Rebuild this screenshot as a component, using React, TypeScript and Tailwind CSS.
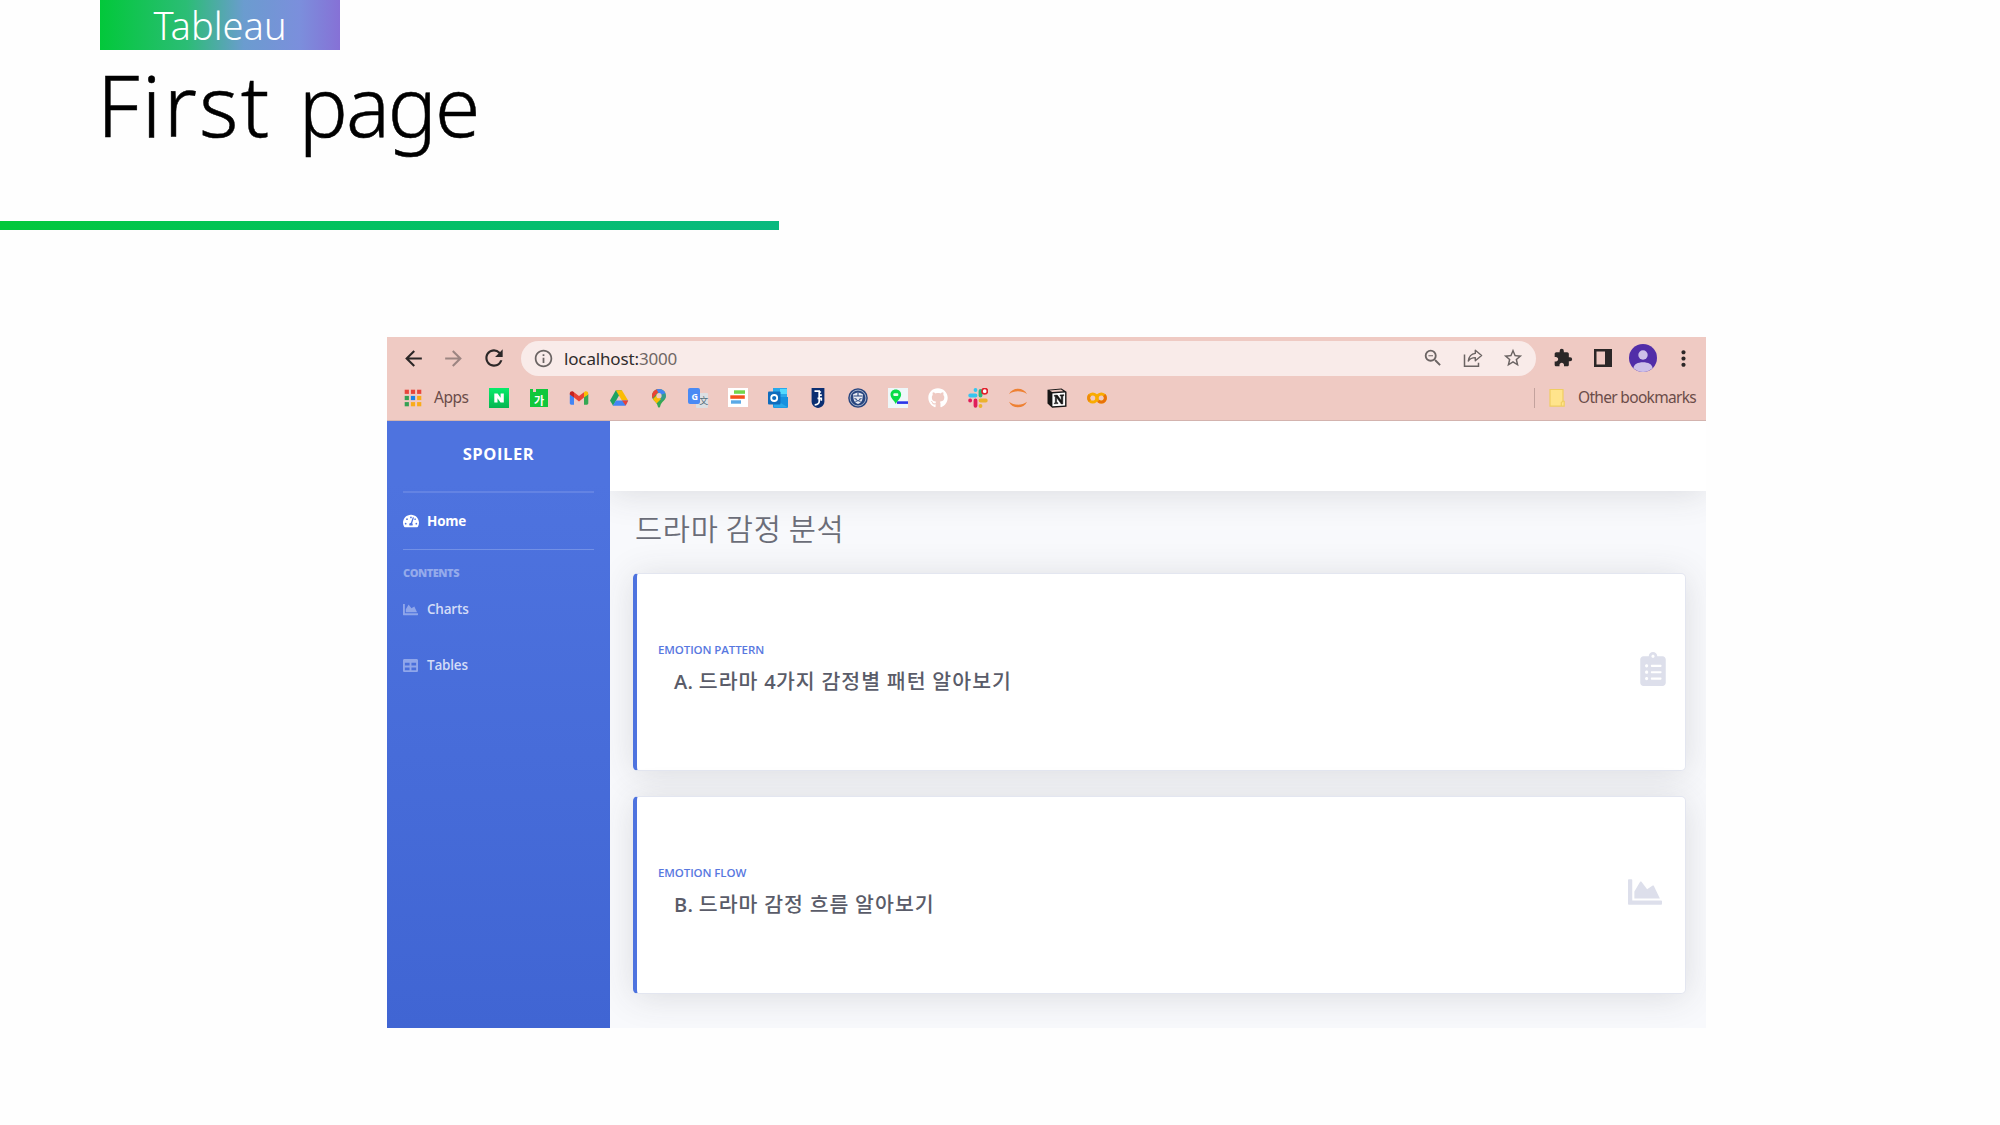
import React from "react";
import { MdArrowBack, MdArrowForward, MdRefresh, MdInfoOutline, MdZoomOut, MdStarBorder, MdExtension, MdMoreVert } from "react-icons/md";
import { FaTachometerAlt, FaChartArea, FaTable, FaClipboardList, FaGithub } from "react-icons/fa";

const Slot = ({ children }: { children: React.ReactNode }) => (
  <span className="flex h-5 w-5 shrink-0 items-center justify-center">{children}</span>
);

const Svg = ({ children }: { children: React.ReactNode }) => (
  <svg viewBox="0 0 20 20" className="h-5 w-5">{children}</svg>
);

const gridColors = ["#e8453c", "#e8453c", "#e8453c", "#34a053", "#1a82e8", "#f9ab1a", "#34a053", "#f9ab1a", "#f9ab1a"];

const AppsIcon = () => (
  <Svg>
    {gridColors.map((c, i) => (
      <rect key={i} x={1.7 + (i % 3) * 6.2} y={1.7 + Math.floor(i / 3) * 6.2} width="4.2" height="4.2" fill={c} />
    ))}
  </Svg>
);

const NaverIcon = () => (
  <Svg>
    <defs>
      <linearGradient id="nv" x1="0" y1="0" x2="0" y2="1">
        <stop offset="0" stopColor="#07ec6a" />
        <stop offset="1" stopColor="#06b551" />
      </linearGradient>
    </defs>
    <rect width="20" height="20" fill="url(#nv)" />
    <path d="M5.3 5.6h3.3l3 4.2V5.6h3.2v9h-3.3l-3-4.3v4.3H5.3z" fill="#fff" />
  </Svg>
);

const DictIcon = () => (
  <span className="relative flex h-[18px] w-[18px] items-center justify-center bg-[#10c73c] pt-1 font-['Noto_Sans_CJK_KR',sans-serif] text-[11px] leading-none font-bold text-white">
    <span className="absolute top-0 left-[3px] h-[3px] w-[3px] bg-[#efcac3]" />
    가
  </span>
);

const GmailIcon = () => (
  <Svg>
    <path d="M.8 6v9.3c0 .8.6 1.4 1.4 1.4H5V8.8z" fill="#4285f4" />
    <path d="M15 8.8v7.9h2.9c.8 0 1.4-.6 1.4-1.4V6z" fill="#34a853" />
    <path d="M.8 5.4C.8 3.5 3 2.6 4.4 3.7L5 4.2v5.4L.8 6.4z" fill="#c5221f" />
    <path d="M5 4.2l5 3.8 5-3.8v5.4l-5 3.8-5-3.8z" fill="#ea4335" />
    <path d="M15 4.2l.6-.5c1.5-1.1 3.6-.2 3.6 1.7v1L15 9.6z" fill="#fbbc04" />
  </Svg>
);

const DriveIcon = () => (
  <Svg>
    <path d="M6.8 2.2h6.1L10 7.6 4.1 17.8 1 12.4z" fill="#1ea362" />
    <path d="M6.8 2.2h6.1l6.2 10.4h-6.2z" fill="#fbbc04" />
    <path d="M7 12.4h12.2l-2.7 5.4H3.8z" fill="#4285f4" />
    <path d="M13 12.4h6.2l-2.5 5.2z" fill="#ea4335" />
  </Svg>
);

const MapsIcon = () => (
  <Svg>
    <defs>
      <clipPath id="pin"><path d="M10 1c-4 0-7 3-7 6.9 0 4.3 4.8 5.6 5.7 10 .2 1.3.6 1.7 1.3 1.7s1.1-.4 1.3-1.7C12.2 13.5 17 12.2 17 7.9 17 4 14 1 10 1z" /></clipPath>
    </defs>
    <g clipPath="url(#pin)">
      <rect width="20" height="20" fill="#34a853" />
      <path d="M0 0h13L3 11H0z" fill="#ea4335" />
      <path d="M6.5 0H20v4l-9 3z" fill="#4285f4" />
      <path d="M3 12l5-5 4 4-6 6z" fill="#fbbc04" />
      <path d="M12 5l5-3 2 6-7 5z" fill="#4285f4" opacity=".35" />
    </g>
    <circle cx="10" cy="7.7" r="2.6" fill="#efcac3" />
  </Svg>
);

const TranslateIcon = () => (
  <span className="relative block h-5 w-5">
    <span className="absolute right-0 bottom-0 flex h-[15px] w-[12px] items-center justify-center rounded-[1px] bg-[#dcdfe3] pl-0.5 font-['Noto_Sans_CJK_SC',sans-serif] text-[9px] leading-none text-[#546e7a]">文</span>
    <span className="absolute top-0 left-0 flex h-4 w-[12px] items-center justify-center rounded-[2px] bg-[#4a8af4] font-['Open_Sans',sans-serif] text-[9px] leading-none font-bold text-white">G</span>
  </span>
);

const BarsIcon = () => (
  <Svg>
    <rect y="0" width="20" height="19" fill="#fff" />
    <rect x="6" y="2.3" width="11" height="3.5" fill="#72d64c" />
    <rect x="2.3" y="7.3" width="14.5" height="3.5" fill="#f4511e" />
    <rect x="3" y="12.3" width="10" height="3.4" fill="#5aa9e6" />
  </Svg>
);

const OutlookIcon = () => (
  <Svg>
    <rect x="5" y="0" width="14" height="12" fill="#28a8ea" />
    <rect x="12" y="1" width="7" height="5" fill="#50d9ff" />
    <path d="M5 9h15v9.5c0 .8-.5 1.5-1.3 1.5H6.3C5.5 20 5 19.3 5 18.5z" fill="#1490df" />
    <path d="M5 10l15 9.5H6z" fill="#28a8ea" />
    <rect x="0" y="3.5" width="12.5" height="13" rx="1" fill="#0f6cbd" />
    <circle cx="6.2" cy="10" r="3" fill="none" stroke="#fff" strokeWidth="1.8" />
  </Svg>
);

const ShieldIcon = () => (
  <Svg>
    <path d="M3.6 0h12.8v13.5c0 3.5-3 6-6.4 6.5-3.4-.5-6.4-3-6.4-6.5z" fill="#0b2f72" />
    <path d="M6.500 3.200h4.700v10.300c0 1.800-1.300 3-4.500 3.400M11.500 7.200h2.300M11.500 4h1.600M9.500 10.300h3.800v2.500" stroke="#fff" strokeWidth="1.700" fill="none" />
  </Svg>
);

const SealIcon = () => (
  <Svg>
    <circle cx="10" cy="10" r="9.800" fill="#28457f" />
    <circle cx="10" cy="10" r="7.900" fill="none" stroke="#c4cbdc" strokeWidth=".8" />
    <path d="M5 6.500c3-2.200 7-2.200 10 0l-.6 4.500c-.4 2.500-2 4-4.400 5-2.400-1-4-2.500-4.400-5z" fill="#e7eaf2" />
    <path d="M10 5v3M5.500 8h9M6.500 10.500l2.500 1M13.500 10.500l-2.500 1M7.500 13.500L10 12.500l2.500 1" fill="none" stroke="#28457f" strokeWidth="1.100" />
  </Svg>
);

const PlaceIcon = () => (
  <Svg>
    <rect width="20" height="20" fill="#eef7f9" />
    <rect x="9" y="13.300" width="11" height="2.600" fill="#2a35e8" />
    <path d="M7.800 1.500c-3.200 0-5.300 2.300-5.300 5.100 0 3.700 3.500 5.500 5.300 9.400 1.800-3.900 5.300-5.700 5.300-9.400 0-2.800-2.100-5.100-5.300-5.100z" fill="#08dc48" />
    <rect x="5.300" y="5.300" width="5" height="2.600" rx="1" fill="#e8fff0" />
  </Svg>
);

const SlackIcon = () => (
  <Svg>
    <g strokeWidth="3.800" strokeLinecap="round">
      <path d="M7.500 7.500H2.200M7.500 2v.1" stroke="#36c5f0" />
      <path d="M12.500 7.500V3" stroke="#2eb67d" />
      <path d="M12.500 12.500h5.300M12.500 17.900v.1" stroke="#ecb22e" />
      <path d="M7.500 12.500v5.300M2.100 12.500h.1" stroke="#e01e5a" />
    </g>
    <circle cx="16.700" cy="3.200" r="2.700" fill="#fff" stroke="#e2202c" strokeWidth="1.700" />
  </Svg>
);

const JupyterIcon = () => (
  <Svg>
    <path d="M1 6.200C2.600 2.600 6 .7 10 .7s7.400 1.900 9 5.500C16.500 4.200 13.300 3.300 10 3.300S3.500 4.200 1 6.200z" fill="#ee8133" />
    <path d="M1 13.700c1.600 3.600 5 5.600 9 5.600s7.400-2 9-5.600c-2.500 2-5.700 3-9 3s-6.500-1-9-3z" fill="#ee8133" />
  </Svg>
);

const NotionIcon = () => (
  <Svg>
    <path d="M.5 1.700L14.500.4l5 3.300v15.100L5.200 19.700.5 15.500z" fill="#161616" />
    <path d="M2.500 2.400L14 1.500l2.500 1.700-11.300.8z" fill="#efcac3" />
    <path d="M5.400 5.400l12.700-.8v12.800l-12.700.9z" fill="#fff" />
    <path d="M7.300 7.300l3-.2 3.900 5.500V8l-1.200-.2v-.9l3.900-.2v.9l-1.100.3v8l-1.500.1-4.700-6.600v5.200l1.400.2v.8l-3.700.2V15l1-.3V8.400l-1-.2z" fill="#161616" stroke="#161616" strokeWidth=".5" />
  </Svg>
);

const ColabIcon = () => (
  <Svg>
    <circle cx="14.300" cy="10" r="4.100" fill="none" stroke="#f9ab00" strokeWidth="3" />
    <path d="M17.200 7.100a4.100 4.100 0 0 1-5.800 5.800" fill="none" stroke="#e8710a" strokeWidth="3" />
    <circle cx="5.700" cy="10" r="4.100" fill="none" stroke="#f9ab00" strokeWidth="3" />
    <path d="M2.800 7.100a4.100 4.100 0 0 0 0 5.800" fill="none" stroke="#ee8a0c" strokeWidth="3" />
  </Svg>
);

const ShareIcon = () => (
  <Svg>
    <path d="M1.500 6.500v11.800h14v-3.500" fill="none" stroke="#6b6463" strokeWidth="1.500" />
    <path d="M12.300 2.300l6.300 5.200-6.300 5.200V9.600c-3.300 0-5.400 1-7 3.400.5-3.700 2.500-7 7-7.600z" fill="none" stroke="#6b6463" strokeWidth="1.400" strokeLinejoin="round" />
  </Svg>
);

const BookmarkFolder = () => (
  <Svg>
    <path d="M3 1.500h13v11.300l1.200.6v4.700H3z" fill="#ffe48c" stroke="#f0cd62" strokeWidth="1.200" />
    <path d="M14.300 18v-3.500l2-1.500" fill="none" stroke="#f0cd62" strokeWidth="1.200" />
  </Svg>
);

const Toolbar = () => (
  <div className="flex h-[42px] items-center pl-[14px] text-[#2b2727]">
    <MdArrowBack className="h-[25px] w-[25px]" />
    <MdArrowForward className="ml-[15px] h-[25px] w-[25px] text-[#9c8582]" />
    <MdRefresh className="ml-[15px] h-[26px] w-[26px]" />
    <div className="ml-[14px] flex h-[35px] w-[1015px] items-center rounded-full bg-[#f9ebe9] pl-3 text-[#6b6463]">
      <MdInfoOutline className="h-[21px] w-[21px]" />
      <span className="ml-[10px] font-['Noto_Sans',sans-serif] text-[17px] leading-none tracking-[-0.15px] text-[#6f6765]">
        <span className="text-[#302c2c]">localhost:</span>3000
      </span>
      <div className="mr-[12px] ml-auto flex items-center gap-[19px]">
        <MdZoomOut className="h-[22px] w-[22px]" />
        <ShareIcon />
        <MdStarBorder className="h-[22px] w-[22px]" />
      </div>
    </div>
    <MdExtension className="ml-[17px] h-[20px] w-[20px]" />
    <svg viewBox="0 0 18 18" className="ml-[21px] h-[18px] w-[18px]">
      <path d="M0 0h18v18H0zM2.500 2.500v13h8.500v-13z" fill="#2b2727" fillRule="evenodd" />
    </svg>
    <svg viewBox="0 0 28 28" className="ml-[17px] h-7 w-7">
      <circle cx="14" cy="14" r="14" fill="#512da8" />
      <circle cx="14" cy="11" r="4.700" fill="#cdbfe8" />
      <path d="M4.500 24.300c0-4 4.500-6 9.500-6s9.500 2 9.500 6A14 14 0 0 1 14 28a14 14 0 0 1-9.500-3.700z" fill="#cdbfe8" />
    </svg>
    <MdMoreVert className="ml-[14px] h-[25px] w-[25px]" />
  </div>
);

const Bookmarks = () => (
  <div className="flex h-[38px] items-center pl-4 font-['Noto_Sans',sans-serif] text-[15.500px] tracking-[-0.45px] text-[#6b4c49]">
    <Slot><AppsIcon /></Slot>
    <span className="ml-[11px] w-[55px]">Apps</span>
    <div className="flex gap-[19.900px]">
      <Slot><NaverIcon /></Slot>
      <Slot><DictIcon /></Slot>
      <Slot><GmailIcon /></Slot>
      <Slot><DriveIcon /></Slot>
      <Slot><MapsIcon /></Slot>
      <Slot><TranslateIcon /></Slot>
      <Slot><BarsIcon /></Slot>
      <Slot><OutlookIcon /></Slot>
      <Slot><ShieldIcon /></Slot>
      <Slot><SealIcon /></Slot>
      <Slot><PlaceIcon /></Slot>
      <Slot><FaGithub className="h-5 w-5 text-white" /></Slot>
      <Slot><SlackIcon /></Slot>
      <Slot><JupyterIcon /></Slot>
      <Slot><NotionIcon /></Slot>
      <Slot><ColabIcon /></Slot>
    </div>
    <div className="mr-[9px] ml-auto flex items-center">
      <span className="h-5 w-px bg-[#c3a29d]" />
      <span className="ml-3"><BookmarkFolder /></span>
      <span className="ml-[11px] w-[119px] tracking-[-0.68px] whitespace-nowrap">Other bookmarks</span>
    </div>
  </div>
);

const SideItem = ({ icon, label }: { icon: React.ReactNode; label: string }) => (
  <div className="flex h-14 items-center text-[13.500px] font-semibold tracking-[-0.2px] text-[#d3dcf7]">
    <span className="w-[24px] text-[#8fa6ea]">{icon}</span>
    {label}
  </div>
);

const Sidebar = () => (
  <aside className="w-[223px] shrink-0 bg-linear-to-b from-[#4e73df] from-10% to-[#4065d3] px-4 font-['Open_Sans',sans-serif]">
    <div className="flex h-[70px] items-center justify-center pb-[3px] text-[16.500px] font-bold tracking-[0.600px] text-white">SPOILER</div>
    <div className="h-[2px] w-[191px] bg-[#6383e3]" />
    <div className="flex h-14 items-center text-[13.500px] font-bold tracking-[-0.2px] text-white">
      <FaTachometerAlt className="mr-2 h-4 w-4" />
      Home
    </div>
    <div className="h-px w-[191px] bg-[#7290e6]" />
    <div className="flex h-[31px] items-end text-[11px] leading-[16px] font-extrabold tracking-[-0.45px] text-[#94aaeb]">CONTENTS</div>
    <SideItem icon={<FaChartArea className="h-[15px] w-[15px]" />} label="Charts" />
    <SideItem icon={<FaTable className="h-[15px] w-[15px]" />} label="Tables" />
  </aside>
);

type CardProps = { tag: string; children: React.ReactNode; icon: React.ReactNode };

const Card = ({ tag, children, icon }: CardProps) => (
  <section className="flex h-[197.500px] items-center rounded-[5px] border border-l-4 border-[#e3e6f0] border-l-[#4e73df] bg-white pl-[21px] shadow-[0_3px_34px_0_rgba(58,59,69,0.15)]">
    <div className="pb-1">
      <div className="font-['Open_Sans',sans-serif] text-[11.500px] leading-[16px] font-semibold tracking-[-0.1px] text-[#5878df]">{tag}</div>
      <div className="mt-[7px] pl-4 font-['Noto_Sans_CJK_KR',sans-serif] text-[20.500px] leading-[30px] font-medium tracking-[1.050px] text-[#5a5c69]">{children}</div>
    </div>
    <div className="ml-auto pb-[5px] text-[#dddfeb]">{icon}</div>
  </section>
);

const Latin = ({ children }: { children: React.ReactNode }) => (
  <span className="font-['Open_Sans',sans-serif] text-[20px] font-semibold tracking-[0.300px]">{children}</span>
);

export default function App() {
  return (
    <div className="h-[1125px] w-[2000px] overflow-hidden bg-[#fefefe]">
      <div className="ml-[100px] h-[50px] w-[240px] bg-[linear-gradient(90deg,#02c83a_0%,#2bbd75_36%,#6b9ccf_60%,#7b8fdc_83%,#8671d6_100%)] text-center font-['Noto_Sans',sans-serif] text-[38px] leading-[50px] font-light text-white">
        Tableau
      </div>
      <h1 className="ml-[97px] h-[171px] font-['Noto_Sans',sans-serif] text-[84px] leading-[110px] font-light text-black [-webkit-text-stroke:0.5px_black]">
        <span className="tracking-[2.300px]">First </span>
        <span className="ml-[3px] text-[82px] tracking-[-2px]">page</span>
      </h1>
      <div className="h-[9px] w-[779px] bg-linear-to-r from-[#02c83a] to-[#09b97f]" />

      <div className="mt-[107px] ml-[387px] h-[691px] w-[1319px] overflow-hidden">
        <div className="h-[84px] border-b border-[#d3b3ae] bg-[#efcac3]">
          <Toolbar />
          <Bookmarks />
        </div>
        <div className="flex h-[607px]">
          <Sidebar />
          <main className="flex-1 overflow-hidden bg-[#f8f9fc]">
            <div className="h-[70px] bg-white shadow-[0_3px_34px_0_rgba(58,59,69,0.15)]" />
            <h2 className="mt-[14px] ml-[25px] h-[68px] font-['Noto_Sans_CJK_KR',sans-serif] text-[29.500px] leading-[44px] font-[350] tracking-[0.700px] text-[#6b6d78]">드라마 감정 분석</h2>
            <div className="mr-5 ml-[23px] flex flex-col gap-[25.500px]">
              <Card tag="EMOTION PATTERN" icon={<FaClipboardList className="mr-[15px] h-[34px] w-[34px]" />}>
                <Latin>A. </Latin>드라마 <Latin>4</Latin>가지 감정별 패턴 알아보기
              </Card>
              <Card tag="EMOTION FLOW" icon={<FaChartArea className="mr-[23px] h-[34px] w-[34px]" />}>
                <Latin>B. </Latin>드라마 감정 흐름 알아보기
              </Card>
            </div>
          </main>
        </div>
      </div>
    </div>
  );
}
